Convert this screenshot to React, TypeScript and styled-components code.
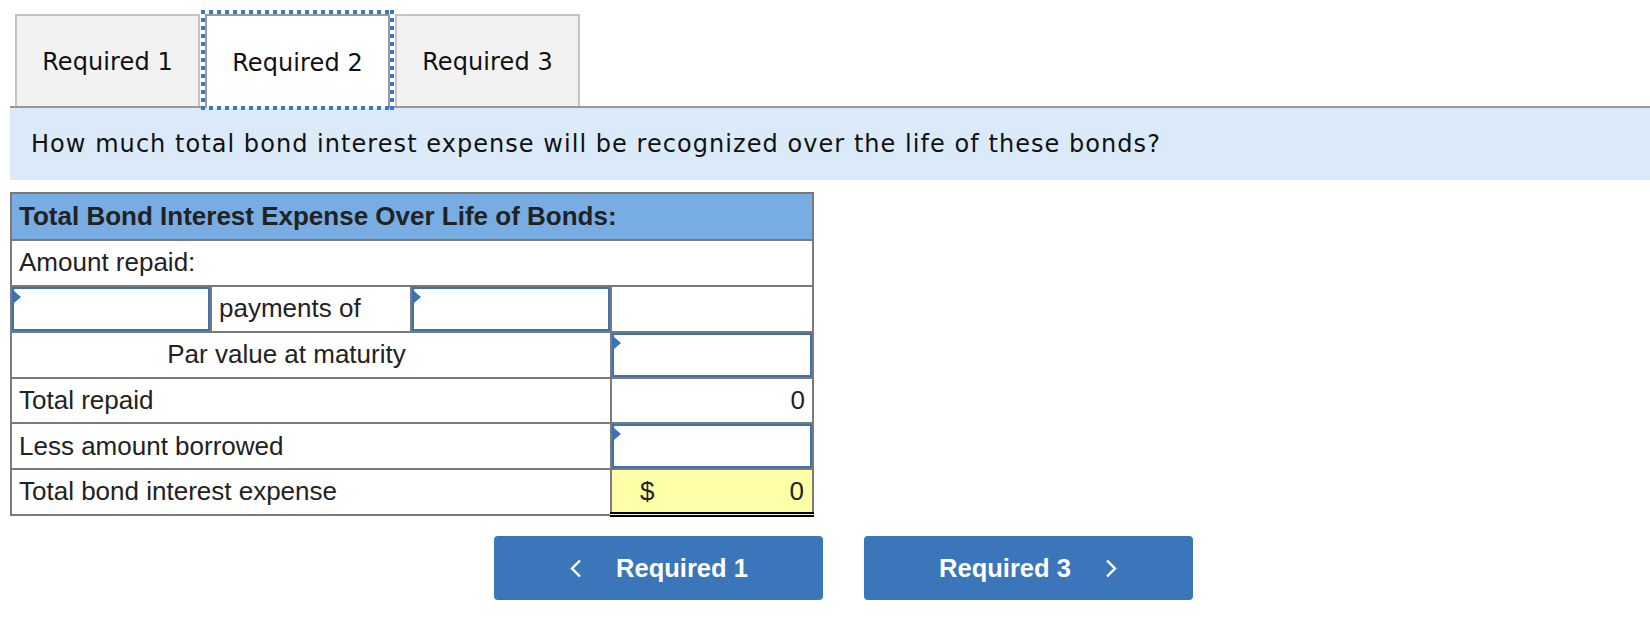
import styled, {createGlobalStyle, css} from 'styled-components';

const GlobalStyle = createGlobalStyle`
	body {
		margin: 0;
		background: #fff;
		font-family: 'DejaVu Sans', Verdana, sans-serif;
		color: #111;
	}
`;

const Page = styled.div`
	padding: 10px 0 0 10px;
`;

const TabList = styled.div`
	display: flex;
	gap: 5px;
	padding: 4px 0 0 5px;
	border-bottom: 2px solid #999;
`;

const Tab = styled.div<{$active?: boolean}>`
	position: relative;
	width: 185px;
	height: 92px;
	box-sizing: border-box;
	display: flex;
	align-items: center;
	justify-content: center;
	padding-top: 2px;
	border: 2px solid #c4c4c4;
	border-bottom: none;
	background: #f2f2f2;
	font-size: 24px;
	letter-spacing: 0.1px;
	color: #111;
	cursor: pointer;
	${({$active}) =>
		$active &&
		css`
			height: 94px;
			margin-bottom: -2px;
			background: #fff;
			border-color: #9a9a9a;
			z-index: 1;
			&::after {
				content: '';
				position: absolute;
				inset: -6px -6px -2px -6px;
				background:
					repeating-linear-gradient(90deg, #3a78c4 0 4px, transparent 4px 8px) top / 100% 4px no-repeat,
					repeating-linear-gradient(90deg, #3a78c4 0 4px, transparent 4px 8px) bottom / 100% 4px no-repeat,
					repeating-linear-gradient(180deg, #3a78c4 0 4px, transparent 4px 8px) left / 4px 100% no-repeat,
					repeating-linear-gradient(180deg, #3a78c4 0 4px, transparent 4px 8px) right / 4px 100% no-repeat;
				pointer-events: none;
			}
		`}
`;

const Question = styled.div`
	height: 72px;
	display: flex;
	align-items: center;
	padding-left: 21px;
	background: #dbeaf8;
	font-size: 24px;
	letter-spacing: 1.05px;
	color: #111;
`;

const Table = styled.table`
	margin-top: 12px;
	width: 802px;
	table-layout: fixed;
	border-collapse: collapse;
	font-family: 'Liberation Sans', Arial, sans-serif;
	font-size: 26px;
	color: #222;
	& td {
		border: 2px solid #7a7a7a;
		height: 45.5px;
		padding: 0 7px;
		box-sizing: border-box;
	}
`;

const HeadCell = styled.td`
	background: #78ade3;
	font-weight: 700;
	height: 47px !important;
`;

const Cell = styled.td<{$align?: 'left' | 'center' | 'right'; $total?: boolean}>`
	text-align: ${({$align}) => $align || 'left'};
	${({$total}) =>
		$total &&
		css`
			border-top: 2px solid #000 !important;
		`}
`;

const InputCell = styled.td`
	padding: 0 !important;
	position: relative;
`;

const InputBox = styled.div`
	position: relative;
	height: 44px;
	box-sizing: border-box;
	border: 2px solid #3a72b8;
	background: #fff;
	&::before {
		content: '';
		position: absolute;
		left: 0;
		top: 2px;
		border-left: 7px solid #3a72b8;
		border-top: 6px solid transparent;
		border-bottom: 6px solid transparent;
	}
`;

const SumCell = styled.td`
	background: #ffffa8;
	border-top: 2px solid #000 !important;
	border-bottom: 5px double #000 !important;
	padding: 0 8px 0 28px !important;
`;

const SumInner = styled.div`
	display: flex;
	justify-content: space-between;
`;

const Buttons = styled.div`
	display: flex;
	gap: 41px;
	padding: 19px 0 0 484px;
`;

const NavButton = styled.button`
	width: 329px;
	height: 64px;
	display: flex;
	align-items: center;
	justify-content: center;
	gap: 34px;
	border: none;
	border-radius: 4px;
	background: #3a76b9;
	color: #fff;
	font-family: 'Liberation Sans', Arial, sans-serif;
	font-size: 25.5px;
	font-weight: 700;
	cursor: pointer;
`;

const Chevron = ({dir}: {dir: 'left' | 'right'}) => (
	<svg width='13' height='19' viewBox='0 0 13 19'>
		<polyline
			points={dir === 'left' ? '11,1.5 3,9.5 11,17.5' : '2,1.5 10,9.5 2,17.5'}
			fill='none'
			stroke='#fff'
			strokeWidth='2.4'
		/>
	</svg>
);

const Input = () => (
	<InputCell>
		<InputBox />
	</InputCell>
);

const App = () => {
	return (
		<Page>
			<GlobalStyle />
			<TabList>
				<Tab>Required 1</Tab>
				<Tab $active>Required 2</Tab>
				<Tab>Required 3</Tab>
			</TabList>
			<Question>How much total bond interest expense will be recognized over the life of these bonds?</Question>
			<Table>
				<colgroup>
					<col style={{width: 200}} />
					<col style={{width: 200}} />
					<col style={{width: 200}} />
					<col style={{width: 202}} />
				</colgroup>
				<tbody>
					<tr>
						<HeadCell colSpan={4}>Total Bond Interest Expense Over Life of Bonds:</HeadCell>
					</tr>
					<tr>
						<Cell colSpan={4}>Amount repaid:</Cell>
					</tr>
					<tr>
						<Input />
						<Cell>payments of</Cell>
						<Input />
						<Cell />
					</tr>
					<tr>
						<Cell colSpan={3} $align='center' style={{paddingRight: 56}}>
							Par value at maturity
						</Cell>
						<Input />
					</tr>
					<tr>
						<Cell colSpan={3}>Total repaid</Cell>
						<Cell $align='right' $total>
							0
						</Cell>
					</tr>
					<tr>
						<Cell colSpan={3}>Less amount borrowed</Cell>
						<Input />
					</tr>
					<tr>
						<Cell colSpan={3}>Total bond interest expense</Cell>
						<SumCell>
							<SumInner>
								<span>$</span>
								<span>0</span>
							</SumInner>
						</SumCell>
					</tr>
				</tbody>
			</Table>
			<Buttons>
				<NavButton>
					<Chevron dir='left' />
					Required 1
				</NavButton>
				<NavButton>
					Required 3
					<Chevron dir='right' />
				</NavButton>
			</Buttons>
		</Page>
	);
};

export default App;
